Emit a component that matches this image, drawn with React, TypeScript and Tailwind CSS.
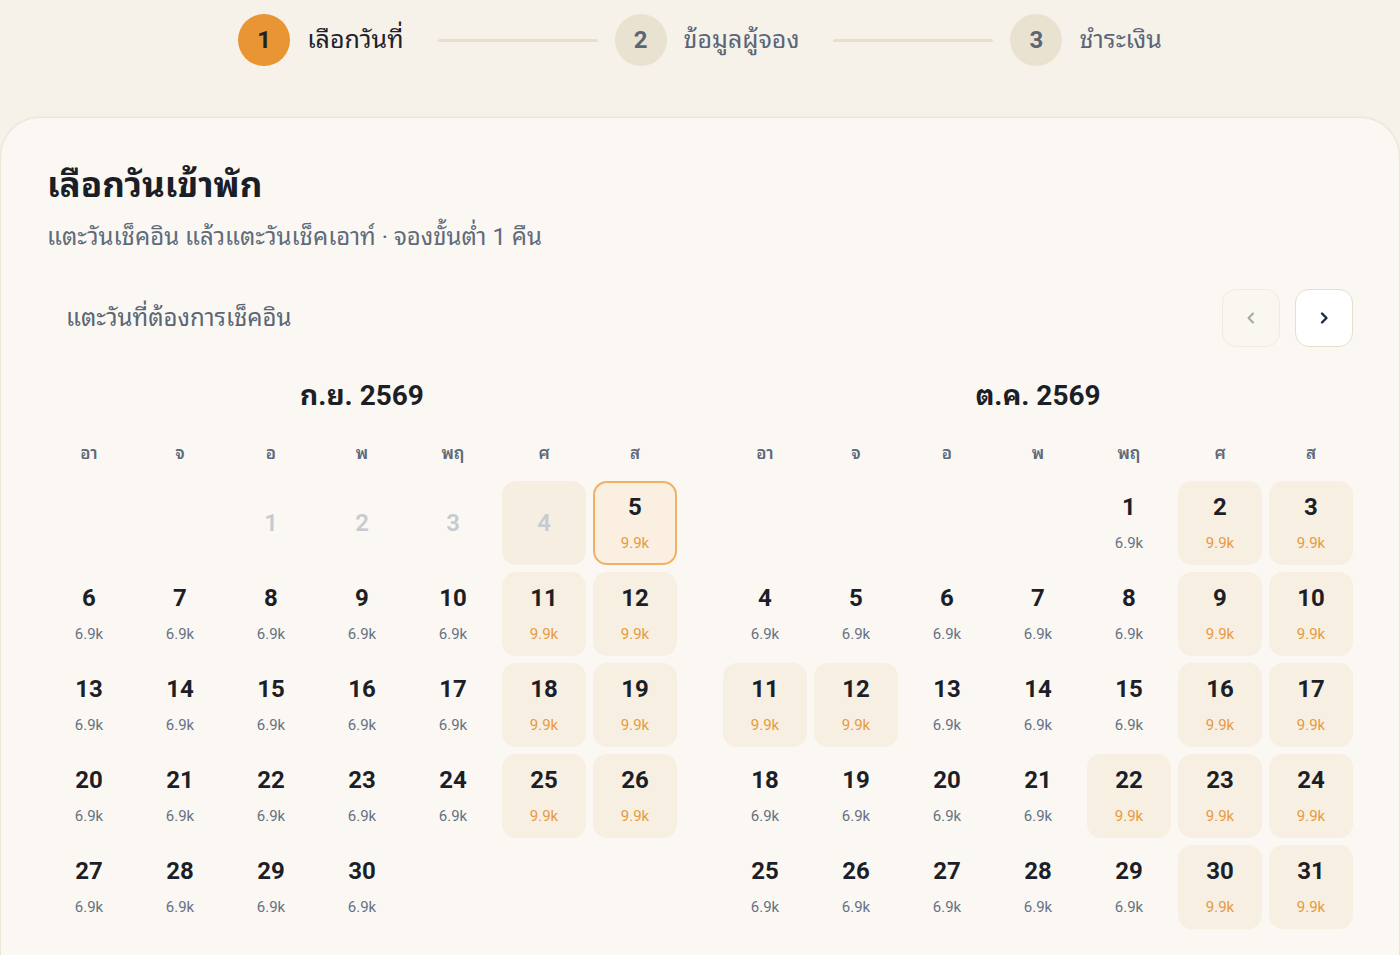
import React from "react";

type Cell = { day: number; price?: string; tint?: boolean; disabled?: boolean; selected?: boolean } | null;

const FONT = { fontFamily: 'Roboto, "Noto Sans Thai Looped", "Noto Sans Thai", "DejaVu Sans", sans-serif' };

function buildSept(): Cell[] {
  const cells: Cell[] = [null, null];
  for (let d = 1; d <= 30; d++) {
    const col = (d + 1) % 7;
    const weekend = col === 5 || col === 6;
    if (d <= 4) cells.push({ day: d, disabled: true, tint: weekend });
    else if (d === 5) cells.push({ day: d, price: "9.9k", tint: true, selected: true });
    else cells.push({ day: d, price: weekend ? "9.9k" : "6.9k", tint: weekend });
  }
  return cells;
}

function buildOct(): Cell[] {
  const cells: Cell[] = [null, null, null, null];
  const holidays = [11, 12, 22];
  for (let d = 1; d <= 31; d++) {
    const col = (d + 3) % 7;
    const hi = col === 5 || col === 6 || holidays.includes(d);
    cells.push({ day: d, price: hi ? "9.9k" : "6.9k", tint: hi });
  }
  return cells;
}

const WEEK = ["อา", "จ", "อ", "พ", "พฤ", "ศ", "ส"];

function DayCell({ c }: { c: Cell }) {
  if (!c) return <div className="h-[84px]" />;
  if (c.disabled) {
    return (
      <div
        className={`h-[84px] rounded-[14px] flex items-center justify-center text-[24px] font-semibold text-[#c7cbd1] ${
          c.tint ? "bg-[#f7eee2]" : ""
        }`}
      >
        {c.day}
      </div>
    );
  }
  const base = c.selected
    ? "bg-[#fbefe1] border-2 border-[#eeb266]"
    : c.tint
    ? "bg-[#f8efe3] border-2 border-transparent"
    : "border-2 border-transparent";
  return (
    <div className={`h-[84px] rounded-[14px] flex flex-col items-center pt-[10px] ${base}`}>
      <div className="text-[24px] leading-[28px] font-bold text-[#1c1f27]">{c.day}</div>
      <div className={`mt-[12px] text-[15px] leading-[20px] ${c.tint ? "text-[#e69b3e]" : "text-[#667284]"}`}>
        {c.price}
      </div>
    </div>
  );
}

function Month({ title, cells }: { title: string; cells: Cell[] }) {
  return (
    <div className="flex flex-col">
      <div className="text-center text-[28px] leading-[36px] font-bold text-[#1c1f27]">{title}</div>
      <div className="mt-[27px] grid grid-cols-7 gap-x-[7px]">
        {WEEK.map((w) => (
          <div key={w} className="text-center text-[17px] leading-[24px] font-semibold text-[#5e6a7a]">
            {w}
          </div>
        ))}
      </div>
      <div className="mt-[16px] grid grid-cols-7 gap-x-[7px] gap-y-[7px]">
        {cells.map((c, i) => (
          <DayCell key={i} c={c} />
        ))}
      </div>
    </div>
  );
}

function Step({ n, label, active }: { n: number; label: string; active?: boolean }) {
  return (
    <div className="flex items-center">
      <div
        className={`w-[52px] h-[52px] rounded-full flex items-center justify-center text-[24px] font-bold ${
          active ? "bg-[#e99533] text-[#1d222b]" : "bg-[#e9e2d0] text-[#5a6676]"
        }`}
      >
        {n}
      </div>
      <div className={`ml-[17px] text-[25px] ${active ? "text-[#1d222b]" : "text-[#5a6676]"}`}>{label}</div>
    </div>
  );
}

function Line() {
  return <div className="ml-[34px] mr-[17px] w-[160px] h-[3px] bg-[#e7e1cc] rounded-full" />;
}

export default function App() {
  return (
    <div className="min-h-screen bg-[#f6f2ea]" style={FONT}>
      <div className="h-[117px] flex justify-center pt-[14px]">
        <div className="flex items-center h-[52px]">
          <Step n={1} label="เลือกวันที่" active />
          <Line />
          <Step n={2} label="ข้อมูลผู้จอง" />
          <Line />
          <Step n={3} label="ชำระเงิน" />
        </div>
      </div>
      <div className="bg-[#fbf8f3] rounded-t-[40px] border-t border-x border-[#ebe5d8] px-[46px] pt-[46px] pb-[40px] shadow-[0_-1px_3px_rgba(0,0,0,0.03)]">
        <h1 className="text-[35px] leading-[44px] font-bold text-[#1a1e26]">เลือกวันเข้าพัก</h1>
        <p className="mt-[14px] text-[24px] leading-[30px] text-[#5f6b7b]">
          แตะวันเช็คอิน แล้วแตะวันเช็คเอาท์ · จองขั้นต่ำ 1 คืน
        </p>
        <div className="mt-[37px] flex items-center justify-between">
          <div className="pl-[19px] text-[24px] leading-[30px] text-[#5a6676]">แตะวันที่ต้องการเช็คอิน</div>
          <div className="flex gap-[15px]">
            <button className="w-[58px] h-[58px] rounded-[14px] bg-[#faf7f1] border border-[#efebe2] flex items-center justify-center">
              <svg width="14" height="14" viewBox="0 0 14 14" fill="none">
                <path d="M9 2.5 L4.5 7 L9 11.5" stroke="#a3a6ab" strokeWidth="2" strokeLinecap="round" strokeLinejoin="round" />
              </svg>
            </button>
            <button className="w-[58px] h-[58px] rounded-[14px] bg-white border border-[#e5dfcc] flex items-center justify-center">
              <svg width="14" height="14" viewBox="0 0 14 14" fill="none">
                <path d="M5 2.5 L9.5 7 L5 11.5" stroke="#1d2a45" strokeWidth="2.4" strokeLinecap="round" strokeLinejoin="round" />
              </svg>
            </button>
          </div>
        </div>
        <div className="mt-[31px] grid grid-cols-2 gap-x-[46px]">
          <Month title="ก.ย. 2569" cells={buildSept()} />
          <Month title="ต.ค. 2569" cells={buildOct()} />
        </div>
      </div>
    </div>
  );
}
